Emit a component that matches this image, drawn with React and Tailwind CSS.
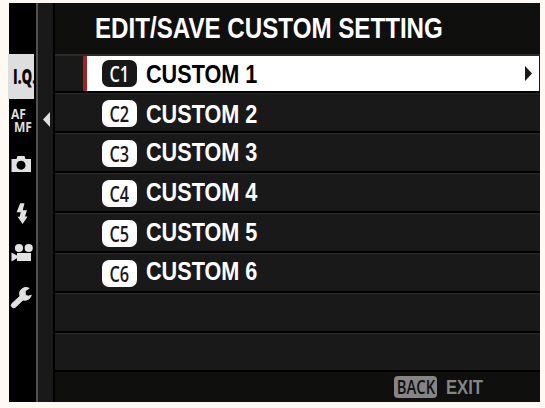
import React from "react";

const rows = [
  { id: "C2", label: "CUSTOM 2", shift: "pt-[2px]" },
  { id: "C3", label: "CUSTOM 3", shift: "pb-[2px]" },
  { id: "C4", label: "CUSTOM 4", shift: "pb-[2px]" },
  { id: "C5", label: "CUSTOM 5", shift: "pb-[2px]" },
  { id: "C6", label: "CUSTOM 6", shift: "pb-[4px]" },
];

const sans = "font-['Liberation_Sans',Arial,sans-serif] font-bold whitespace-nowrap origin-left";

function Badge({ id, dark }) {
  return (
    <span
      className={
        "flex h-[27px] w-[35px] shrink-0 items-center justify-center rounded-[7px] pb-[2px] font-['Open_Sans',sans-serif] text-[22px] leading-none font-semibold " +
        (dark ? "bg-[#181818] text-white" : "mt-[2px] bg-white text-[#181818]")
      }
    >
      <span className="block scale-x-[0.74]">{id}</span>
    </span>
  );
}

function Sidebar() {
  return (
    <nav className="flex w-[27px] shrink-0 flex-col bg-black font-['Open_Sans',sans-serif] font-extrabold">
      <div className="mt-[51px] -ml-px flex h-[45px] w-[26px] items-center bg-[#dedede] pb-px pl-[5px] text-[21px] leading-none text-[#090909]">
        <span className="block w-[21px] origin-left scale-x-[0.64] whitespace-nowrap">I.Q.</span>
      </div>
      <div className="mt-[8px] h-[26px] w-[27px] text-[14px] leading-[13px] font-bold text-[#dedede]">
        <div className="ml-[2px] w-[20px] origin-left scale-x-[0.86]">AF</div>
        <div className="ml-[5px] w-[22px] origin-left scale-x-[0.86]">MF</div>
      </div>
      <svg className="h-[186px] w-[27px]" viewBox="9 133 27 186" fill="#e2e2e2">
        <path fillRule="evenodd" d="M11.5 159h5l1-3h7l1 3h5.5v13H11.5z M21 160.7a4.5 4.5 0 1 0 .01 0z" />
        <path d="M20.2 203.2h4.3l-1.8 7h4.3l-2 6.2h2.6l-5 7.6-5-7.2h2l1.2-4.6h-4.2z" />
        <circle cx="19" cy="248" r="4.1" />
        <circle cx="28.7" cy="248" r="4.1" />
        <path d="M17 253h14v8H17v-2.7l-5.5 3.2v-9l5.5 3z" />
        <path d="M31.3 295.2a6.6 6.6 0 0 1-8.3 4.8L15.6 307a2.5 2.5 0 0 1-3.6-3.6l8-7.2A6.4 6.4 0 0 1 29.2 288.3l-4 2.6.2 4 2.8 1.3z" stroke="#e2e2e2" strokeWidth="0.9" />
      </svg>
    </nav>
  );
}

export default function App() {
  return (
    <div className="h-[408px] w-[545px] overflow-hidden bg-[#fef9f3] pt-[3px] pl-[9px]">
      <div className="flex h-[399px] w-[531px] bg-[#0f0f0e]">
        <Sidebar />
        <div className="flex w-[17px] shrink-0 border-l-2 border-[#505050] bg-[#191919] pt-[109px] pl-[5px]">
          <svg className="h-[15px] w-[7px]" viewBox="0 0 7 15" fill="#dedede">
            <path d="M7 0v15L0 7.5z" />
          </svg>
        </div>
        <div className="w-[2px] shrink-0 bg-black" />
        <main className="flex w-[485px] flex-col">
          <header className="flex h-[51px] items-center pb-[2px] pl-[40px] text-white">
            <h1 className={sans + " scale-x-[0.824] text-[29.3px] leading-none"}>EDIT/SAVE CUSTOM SETTING</h1>
          </header>
          <div className="flex h-[39px] border-t-2 border-b-2 border-t-[#2b2b2b] border-b-black bg-[#191919] pr-px pl-[28px]">
            <div className="flex flex-1 items-center border-l-4 border-[#a32227] bg-white pr-[7px] pl-[15px]">
              <Badge id="C1" dark />
              <span className={sans + " ml-[9px] scale-x-[0.832] text-[26px] leading-none text-black"}>CUSTOM 1</span>
              <svg className="ml-auto h-[15px] w-[7px]" viewBox="0 0 7 15" fill="#181818">
                <path d="M0 0v15l7-7.5z" />
              </svg>
            </div>
          </div>
          {rows.map((r) => (
            <div key={r.id} className="flex h-[40px] items-center border-t border-b-2 border-t-[#292929] border-b-black bg-[#191919] pl-[47px]">
              <Badge id={r.id} />
              <span className={sans + " ml-[9px] scale-x-[0.832] text-[26px] leading-none text-white " + r.shift}>{r.label}</span>
            </div>
          ))}
          <div className="h-[40px] border-t border-b-2 border-t-[#292929] border-b-black bg-[#191919]" />
          <div className="h-[39px] border-t border-b-2 border-t-[#292929] border-b-black bg-[#191919]" />
          <footer className="flex h-[30px] items-center pl-[339px]">
            <span className="flex h-[22px] w-[43px] items-center justify-center rounded-[4px] bg-[#858585] font-['Open_Sans',sans-serif] text-[20px] leading-none font-semibold text-[#111111]">
              <span className="block scale-x-[0.74]">BACK</span>
            </span>
            <span className={sans + " ml-[9px] scale-x-[0.83] text-[20px] leading-none text-[#858585]"}>EXIT</span>
          </footer>
        </main>
      </div>
    </div>
  );
}
